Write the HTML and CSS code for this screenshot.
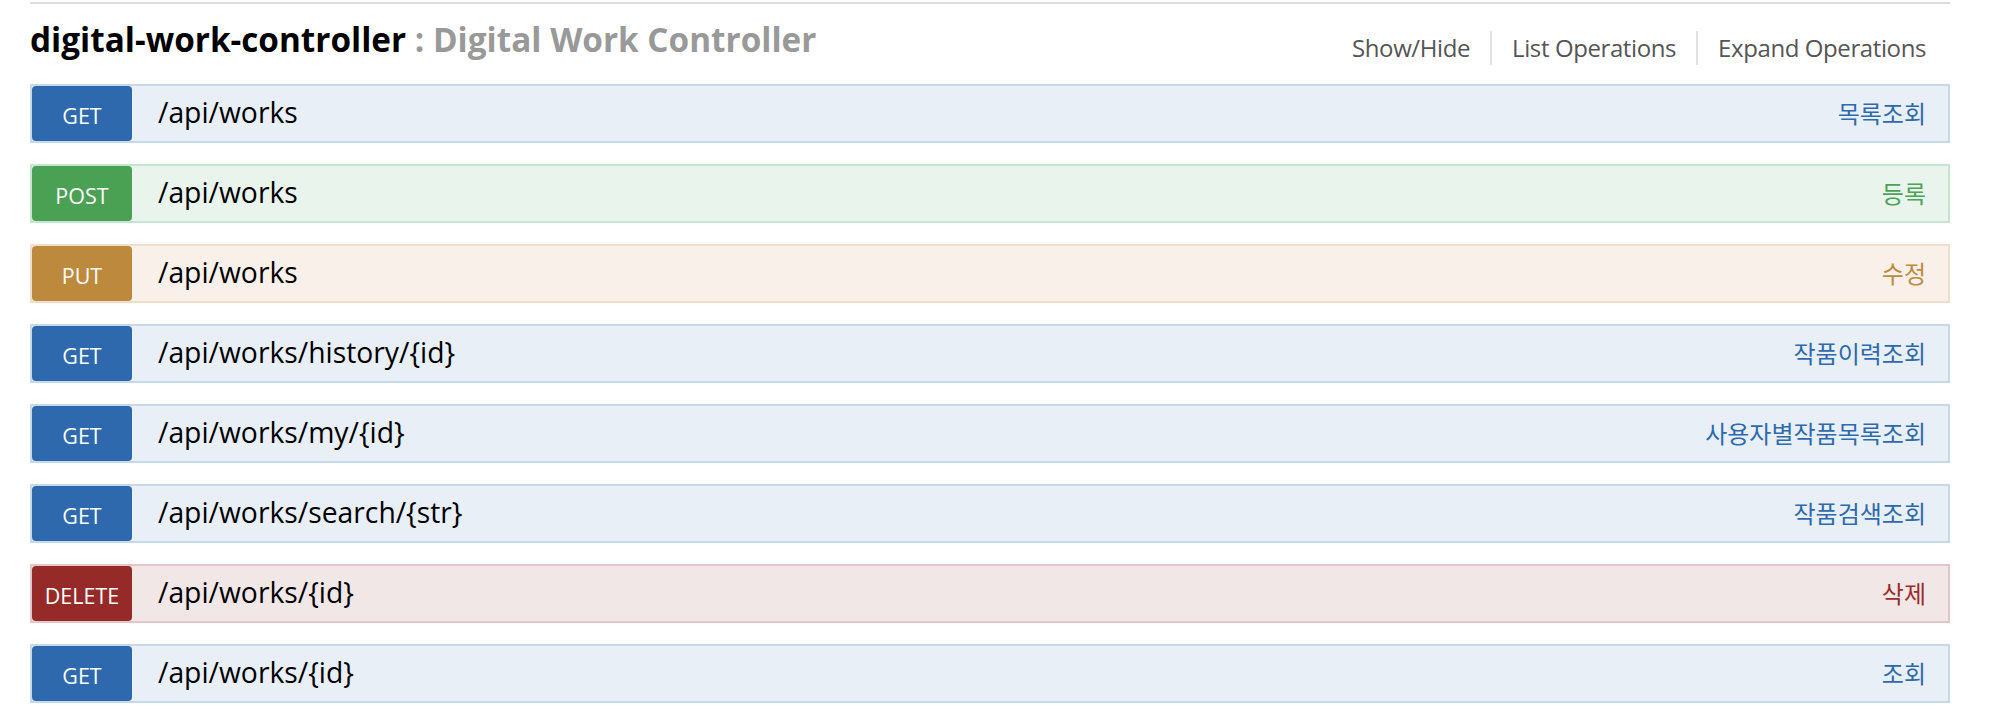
FILE: index.html
```
<!DOCTYPE html>
<html lang="ko">
<head>
<meta charset="utf-8">
<title>digital-work-controller</title>
<link rel="stylesheet" href="styles.css">
</head>
<body>
<div class="resource">
  <div class="heading">
    <h2 class="title"><a class="name">digital-work-controller</a> : <span class="desc">Digital Work Controller</span></h2>
    <ul class="options">
      <li><a>Show/Hide</a></li>
      <li><a>List Operations</a></li>
      <li><a>Expand Operations</a></li>
    </ul>
  </div>
  <ul class="ops">
    <li class="op get"><span class="method">GET</span><span class="path">/api/works</span><span class="summary">목록조회</span></li>
    <li class="op post"><span class="method">POST</span><span class="path">/api/works</span><span class="summary">등록</span></li>
    <li class="op put"><span class="method">PUT</span><span class="path">/api/works</span><span class="summary">수정</span></li>
    <li class="op get"><span class="method">GET</span><span class="path">/api/works/history/{id}</span><span class="summary">작품이력조회</span></li>
    <li class="op get"><span class="method">GET</span><span class="path">/api/works/my/{id}</span><span class="summary">사용자별작품목록조회</span></li>
    <li class="op get"><span class="method">GET</span><span class="path">/api/works/search/{str}</span><span class="summary">작품검색조회</span></li>
    <li class="op delete"><span class="method">DELETE</span><span class="path">/api/works/{id}</span><span class="summary">삭제</span></li>
    <li class="op get"><span class="method">GET</span><span class="path">/api/works/{id}</span><span class="summary">조회</span></li>
  </ul>
</div>
</body>
</html>
```
FILE: styles.css
```
html, body {
  margin: 0;
  padding: 0;
  background: #fff;
}

body {
  font-family: "Open Sans", "Noto Sans", sans-serif;
  color: #000;
}

.resource {
  margin: 2px 0 0 30px;
  width: 1920px;
  border-top: 2px solid #dddddd;
}

.heading {
  display: flex;
  justify-content: space-between;
  align-items: flex-start;
  height: 80px;
}

.title {
  margin: 0;
  padding-top: 14px;
  font-size: 33.3px;
  line-height: 42px;
  font-weight: 700;
  color: #999999;
  white-space: nowrap;
}

.title .name {
  color: #000;
}

.title .desc {
  color: #999999;
}

.options {
  display: flex;
  list-style: none;
  margin: 27px 0 0 0;
  padding: 0 4px 0 0;
}

.options li {
  font-size: 24px;
  line-height: 30px;
  letter-spacing: -0.4px;
  padding: 2px 20px;
  color: #555555;
  border-right: 2px solid #e2e2e2;
}

.options li:last-child {
  border-right: none;
}

.ops {
  list-style: none;
  margin: 0;
  padding: 0;
  display: flex;
  flex-direction: column;
  gap: 21px;
}

.op {
  display: flex;
  align-items: center;
  height: 59px;
  box-sizing: border-box;
  border: 2px solid;
}

.method {
  align-self: stretch;
  width: 100px;
  border-radius: 4px;
  color: #fff;
  font-size: 21.5px;
  display: flex;
  align-items: center;
  justify-content: center;
  padding-top: 3px;
  box-sizing: border-box;
}

.path {
  margin-left: 26px;
  padding-bottom: 3px;
  font-size: 28.3px;
  color: #000;
}

.summary {
  margin-left: auto;
  padding-right: 22px;
  padding-bottom: 3px;
  font-family: "Noto Sans CJK KR", "Noto Sans", sans-serif;
  font-size: 24px;
}

.get { background: #e8eff7; border-color: #c6d9eb; }
.get .method { background: #2e69ad; }
.get .summary { color: #2d6aae; }

.post { background: #e9f4ec; border-color: #c6e5d1; }
.post .method { background: #4aa154; }
.post .summary { color: #4ca35a; }

.put { background: #f8f0e9; border-color: #eedfcc; }
.put .method { background: #bd893d; }
.put .summary { color: #bf8a40; }

.delete { background: #f1e7e7; border-color: #e3c6c7; }
.delete .method { background: #962a29; }
.delete .summary { color: #9a2d2c; }
```
